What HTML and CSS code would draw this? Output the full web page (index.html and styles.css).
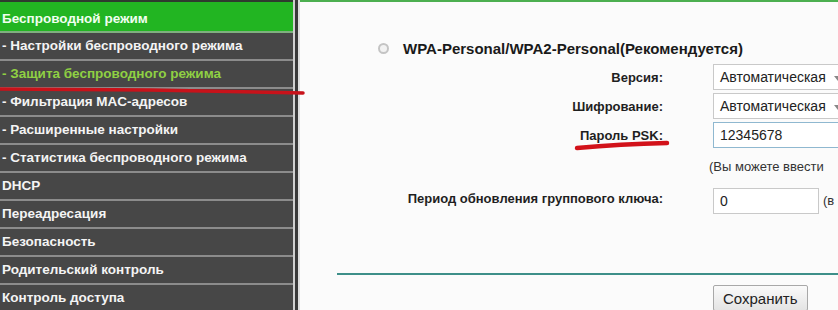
FILE: index.html
```html
<!DOCTYPE html>
<html lang="ru">
<head>
    <meta charset="UTF-8">
    <meta name="viewport" content="width=device-width, initial-scale=1.0">
    <title>Защита беспроводного режима</title>
    <link rel="stylesheet" href="styles.css">
</head>
<body>
    <div class="page">
        <ul class="menu">
            <li class="menu-item menu-open">Беспроводной режим</li>
            <li class="menu-item">- Настройки беспроводного режима</li>
            <li class="menu-item menu-active">- Защита беспроводного режима</li>
            <li class="menu-item">- Фильтрация MAC-адресов</li>
            <li class="menu-item">- Расширенные настройки</li>
            <li class="menu-item">- Статистика беспроводного режима</li>
            <li class="menu-item">DHCP</li>
            <li class="menu-item">Переадресация</li>
            <li class="menu-item">Безопасность</li>
            <li class="menu-item">Родительский контроль</li>
            <li class="menu-item">Контроль доступа</li>
        </ul>

        <div class="divider"></div>

        <div class="content">
            <div class="mode">
                <span class="radio"></span>
                <span class="mode-title">WPA-Personal/WPA2-Personal(Рекомендуется)</span>
            </div>

            <div class="form">
                <label class="field-label">Версия:</label>
                <div class="select">Автоматическая <span class="arrow"></span></div>

                <label class="field-label">Шифрование:</label>
                <div class="select">Автоматическая <span class="arrow"></span></div>

                <label class="field-label psk">Пароль PSK:</label>
                <div class="input input-focus">12345678</div>

                <span></span>
                <div class="hint">(Вы можете ввести</div>

                <label class="field-label">Период обновления группового ключа:</label>
                <div class="row-inline">
                    <div class="input input-short">0</div>
                    <span class="hint">(в</span>
                </div>
            </div>

            <div class="rule"></div>

            <div class="actions">
                <button class="btn">Сохранить</button>
            </div>
        </div>

        <!-- пометки красным маркером поверх скриншота -->
        <svg class="marks" width="838" height="310" viewBox="0 0 838 310">
            <path d="M0 89 L150 90 L303 93" stroke="#c8121a" stroke-width="3.5" fill="none" stroke-linecap="round"/>
            <path d="M577 148 Q620 144 667 143" stroke="#d2121a" stroke-width="4.5" fill="none" stroke-linecap="round"/>
        </svg>
    </div>
</body>
</html>
```

FILE: styles.css
```css
* {
    box-sizing: border-box;
}

body {
    margin: 0;
    background-color: #fbfbfb;
    font-family: "Liberation Sans", Arial, sans-serif;
    color: #222;
}

.page {
    position: relative;
    display: flex;
    width: 838px;
    height: 310px;
    overflow: hidden;
}

/* левое меню */
.menu {
    list-style: none;
    margin: 0;
    padding: 2px 0 0 0;
    width: 293px;
    flex-shrink: 0;
    background-color: #2f3a2f;
}

.menu-item {
    height: 28px;
    line-height: 26px;
    padding-left: 2px;
    background-color: #474747;
    border-bottom: 2px solid #8c8c8c;
    color: #f4f4f4;
    font-size: 13.5px;
    font-weight: bold;
    white-space: nowrap;
}

.menu-open {
    height: 31px;
    padding-top: 4px;
    line-height: 25px;
    background-color: #22b522;
    border-bottom-color: #7fb07f;
    color: #f0fff0;
}

.menu-active {
    color: #8fd043;
}

.divider {
    width: 7px;
    flex-shrink: 0;
    background: linear-gradient(to right, #d0d0d0 0, #d0d0d0 2px, #3a3a3a 2px, #3a3a3a 5px, #e0e0e0 5px);
}

/* правая часть */
.content {
    flex: 1;
    border-top: 2px solid #4caf50;
    padding-top: 37px;
}

.mode {
    display: flex;
    align-items: center;
    gap: 14px;
    padding-left: 78px;
    height: 18px;
}

.radio {
    width: 11px;
    height: 11px;
    border-radius: 50%;
    border: 2px solid #c4c4c4;
    background-color: #f2f2f2;
}

.mode-title {
    font-size: 15px;
    font-weight: bold;
    color: #1a1a1a;
}

.form {
    display: grid;
    grid-template-columns: 363px auto;
    column-gap: 50px;
    row-gap: 3px;
    margin-top: 7px;
    align-items: center;
}

.field-label {
    text-align: right;
    font-size: 13px;
    font-weight: bold;
    color: #1f1f1f;
}

.select,
.input {
    height: 26px;
    line-height: 24px;
    padding-left: 6px;
    border: 1px solid #c9c9c9;
    background-color: #fff;
    font-size: 14px;
    color: #222;
    white-space: nowrap;
}

.select {
    width: 140px;
}

.arrow {
    display: inline-block;
    margin-left: 4px;
    width: 0;
    height: 0;
    border-left: 4px solid transparent;
    border-right: 4px solid transparent;
    border-top: 5px solid #888;
    vertical-align: middle;
}

.input-focus {
    width: 140px;
    border-color: #8fb8d0;
}

.hint {
    font-size: 13px;
    color: #333;
    white-space: nowrap;
    height: 26px;
    line-height: 26px;
    margin-top: 3px;
    margin-left: -4px;
}

.row-inline {
    display: flex;
    align-items: center;
    gap: 4px;
    margin-top: 5px;
}

.input-short {
    width: 106px;
}

.row-inline .hint {
    margin: 0;
}

.rule {
    margin: 59px 0 0 37px;
    height: 2px;
    background-color: #3d8f89;
}

.actions {
    padding: 10px 0 0 413px;
}

.btn {
    height: 26px;
    padding: 0 9px;
    font-family: "Liberation Sans", Arial, sans-serif;
    font-size: 15px;
    color: #222;
    background: linear-gradient(#fafafa, #e4e4e4);
    border: 1px solid #a8a8a8;
    border-radius: 2px;
}

.marks {
    position: absolute;
    left: 0;
    top: 0;
    pointer-events: none;
}
```
